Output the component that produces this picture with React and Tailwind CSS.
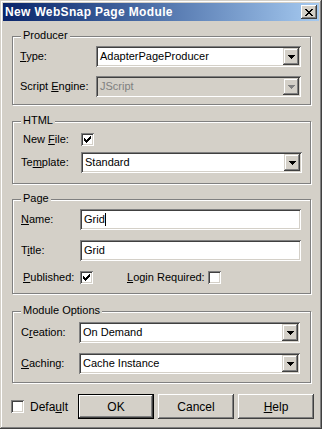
import React from 'react';

const sunken =
  'shadow-[inset_1px_1px_0_#808080,inset_-1px_-1px_0_#ffffff,inset_2px_2px_0_#404040,inset_-2px_-2px_0_#d4d0c8]';
const raised =
  'shadow-[inset_-1px_-1px_0_#404040,inset_1px_1px_0_#ffffff,inset_-2px_-2px_0_#808080,inset_2px_2px_0_#d4d0c8]';
const comboRaised =
  'shadow-[inset_-1px_-1px_0_#404040,inset_1px_1px_0_#d4d0c8,inset_-2px_-2px_0_#808080,inset_2px_2px_0_#ffffff]';

const Arrow = ({ color = '#000' }) => (
  <svg width="7" height="4" viewBox="0 0 7 4" shapeRendering="crispEdges">
    <path d="M0 0h7v1H0zM1 1h5v1H1zM2 2h3v1H2zM3 3h1v1H3z" fill={color} />
  </svg>
);

const Combo = ({ value, disabled }) => (
  <div
    className={`flex-1 h-[21px] flex items-center p-[2px] ${sunken} ${
      disabled ? 'bg-[#d4d0c8] text-[#808080]' : 'bg-white text-black'
    }`}
  >
    <div className="flex-1 pl-[2px] leading-[17px]">{value}</div>
    <div className={`w-[16px] h-[17px] flex items-center justify-center bg-[#d4d0c8] ${comboRaised}`}>
      <Arrow color={disabled ? '#808080' : '#000'} />
    </div>
  </div>
);

const Edit = ({ value, caret }) => (
  <div className={`flex-1 h-[21px] flex items-center bg-white p-[2px] pl-[4px] ${sunken}`}>
    <span className="leading-[17px]">{value}</span>
    {caret && <span className="inline-block w-px h-[13px] bg-black" />}
  </div>
);

const Check = ({ checked }) => (
  <div className={`w-[13px] h-[13px] shrink-0 bg-white flex items-center justify-center ${sunken}`}>
    {checked && (
      <svg width="7" height="7" viewBox="0 0 7 7" shapeRendering="crispEdges">
        <path
          d="M6 0h1v1H6zM5 1h2v1H5zM0 2h1v1H0zM4 2h3v1H4zM0 3h2v1H0zM3 3h3v1H3zM0 4h5v1H0zM1 5h3v1H1zM2 6h1v1H2z"
          fill="#000"
        />
      </svg>
    )}
  </div>
);

const Group = ({ title, className, children }) => (
  <div
    className={`relative border border-[#808080] shadow-[inset_1px_1px_0_#ffffff,1px_1px_0_#ffffff] ${className}`}
  >
    <span className="absolute left-[8px] -top-[8px] px-[2px] bg-[#d4d0c8] leading-[13px]">{title}</span>
    {children}
  </div>
);

const Label = ({ u, pre = '', post = '', className = '' }) => (
  <div className={`shrink-0 ${className}`}>
    {pre}
    <span className="underline underline-offset-[1px]">{u}</span>
    {post}
  </div>
);

const Button = ({ children, def }) => (
  <div
    className={`w-[76px] h-[25px] flex items-center justify-center bg-[#d4d0c8] ${
      def
        ? 'border border-black shadow-[inset_-1px_-1px_0_#404040,inset_1px_1px_0_#ffffff,inset_-2px_-2px_0_#808080]'
        : 'shadow-[inset_-1px_-1px_0_#404040,inset_1px_1px_0_#ffffff,inset_-2px_-2px_0_#808080]'
    }`}
  >
    {children}
  </div>
);

export default function App() {
  return (
    <div className="w-[322px] h-[429px] bg-[#d4d0c8] p-[3px] flex flex-col text-[11px] text-black font-['Liberation_Sans',Arial,sans-serif] shadow-[inset_-1px_-1px_0_#404040,inset_1px_1px_0_#d4d0c8,inset_-2px_-2px_0_#808080,inset_2px_2px_0_#ffffff]">
      {/* caption */}
      <div className="h-[18px] flex items-center justify-between pl-[2px] pr-[2px] bg-linear-to-r from-[#0a246a] to-[#a6caf0]">
        <span className="text-white font-bold text-[12px] tracking-[0.35px] leading-none">New WebSnap Page Module</span>
        <div className={`w-[16px] h-[14px] flex items-center justify-center bg-[#d4d0c8] ${raised}`}>
          <svg width="8" height="7" viewBox="0 0 8 7" shapeRendering="crispEdges">
            <path
              d="M0 0h2v1H0zM6 0h2v1H6zM1 1h2v1H1zM5 1h2v1H5zM2 2h4v1H2zM3 3h2v1H3zM2 4h4v1H2zM1 5h2v1H1zM5 5h2v1H5zM0 6h2v1H0zM6 6h2v1H6z"
              fill="#000"
            />
          </svg>
        </div>
      </div>

      <div className="flex flex-col pl-[9px] pr-[8px]">
        <Group title="Producer" className="mt-[15px] pt-[9px] pb-[7px] pl-[7px] pr-[9px] flex flex-col gap-[9px]">
          <div className="flex items-center">
            <Label u="T" post="ype:" className="w-[76px]" />
            <Combo value="AdapterPageProducer" />
          </div>
          <div className="flex items-center">
            <Label pre="Script " u="E" post="ngine:" className="w-[76px]" />
            <Combo value="JScript" disabled />
          </div>
        </Group>

        <Group title="HTML" className="mt-[16px] pt-[11px] pb-[10px] pl-[8px] pr-[8px] flex flex-col gap-[6px]">
          <div className="flex items-center h-[13px]">
            <Label pre="New " u="F" post="ile:" className="w-[60px] pl-[2px]" />
            <Check checked />
          </div>
          <div className="flex items-center">
            <Label pre="Te" u="m" post="plate:" className="w-[60px]" />
            <Combo value="Standard" />
          </div>
        </Group>

        <Group title="Page" className="mt-[15px] pt-[9px] pb-[9px] pl-[8px] pr-[9px] flex flex-col gap-[10px]">
          <div className="flex items-center">
            <Label u="N" post="ame:" className="w-[59px]" />
            <Edit value="Grid" caret />
          </div>
          <div className="flex items-center">
            <Label pre="T" u="i" post="tle:" className="w-[59px]" />
            <Edit value="Grid" />
          </div>
          <div className="flex items-center h-[13px]">
            <Label u="P" post="ublished:" className="w-[59px] pl-[2px]" />
            <Check checked />
            <Label u="L" post="ogin Required:" className="ml-[34px] w-[81px]" />
            <Check />
          </div>
        </Group>

        <Group title="Module Options" className="mt-[17px] pt-[10px] pb-[8px] pl-[8px] pr-[10px] flex flex-col gap-[10px]">
          <div className="flex items-center">
            <Label pre="C" u="r" post="eation:" className="w-[58px]" />
            <Combo value="On Demand" />
          </div>
          <div className="flex items-center">
            <Label u="C" post="aching:" className="w-[58px]" />
            <Combo value="Cache Instance" />
          </div>
        </Group>
      </div>

      <div className="mt-[11px] flex items-center pl-[8px]">
        <div className="w-[67px] flex items-center">
          <Check />
          <Label pre="Defa" u="u" post="lt" className="ml-[6px] text-[12px]" />
        </div>
        <div className="flex gap-[4px] text-[12px]">
          <Button def>OK</Button>
          <Button>Cancel</Button>
          <Button>
            <span className="underline">H</span>elp
          </Button>
        </div>
      </div>
    </div>
  );
}
